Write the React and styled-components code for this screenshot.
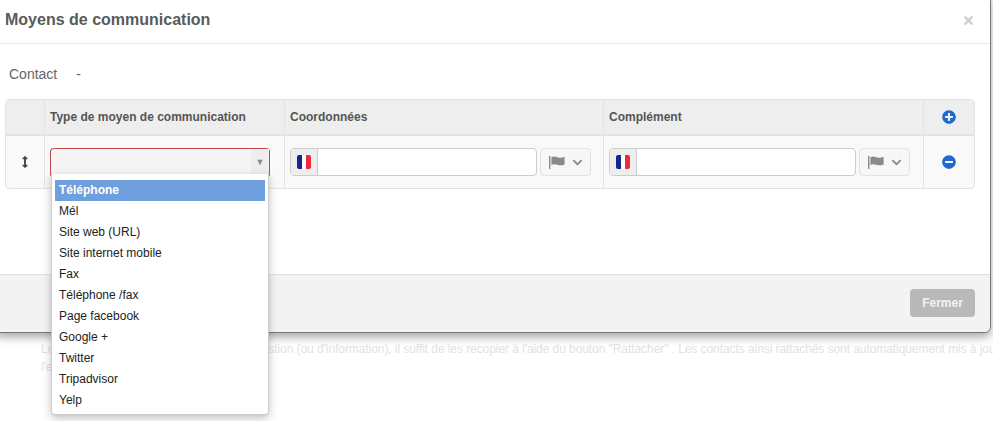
import styled, { createGlobalStyle } from "styled-components";
import { FaArrowsAltV, FaChevronDown, FaMinusCircle, FaPlusCircle, FaTimes } from "react-icons/fa";

const options = ["Téléphone", "Mél", "Site web (URL)", "Site internet mobile", "Fax", "Téléphone /fax", "Page facebook", "Google +", "Twitter", "Tripadvisor", "Yelp"];

const GlobalStyle = createGlobalStyle`
	html, body {
		margin: 0;
		height: 100%;
		background: #fff;
		overflow: hidden;
	}
	* {
		box-sizing: border-box;
	}
	#root {
		font-family: "Liberation Sans", Arial, sans-serif;
		font-size: 12px;
		color: #555;
	}
`;

const Page = styled.div`
	position: relative;
	width: 993px;
	height: 421px;
	overflow: hidden;
	padding: 340px 0 0 41px;
`;

const BackgroundText = styled.p`
	margin: 0;
	width: 952px;
	height: 36px;
	overflow: hidden;
	color: #e2e2e2;
	font-size: 12px;
	line-height: 18px;
	letter-spacing: -0.07px;
	white-space: nowrap;
`;

const Modal = styled.div`
	position: absolute;
	top: -6px;
	left: -6px;
	width: 997px;
	background: #fff;
	border: 1px solid #777;
	border-radius: 6px;
	box-shadow: 0 4px 10px rgba(0, 0, 0, 0.35);
`;

const ModalHeader = styled.header`
	display: flex;
	align-items: center;
	justify-content: space-between;
	height: 49px;
	padding: 2px 15px 0 10px;
	border-bottom: 1px solid #e9e9e9;
`;

const Title = styled.h4`
	margin: 0;
	font-size: 16px;
	font-weight: bold;
	color: #5a5a5a;
`;

const Close = styled.span`
	display: flex;
	color: #cfcfcf;
	font-size: 13px;
`;

const ModalBody = styled.div`
	height: 230px;
	padding: 20px 16px 0 10px;
`;

const ContactRow = styled.div`
	display: flex;
	gap: 19px;
	height: 35px;
	padding: 2px 0 0 4px;
	font-size: 14px;
	line-height: 16px;
	color: #666;
`;

const Table = styled.div`
	display: grid;
	grid-template-columns: 38px 240px 319px 320px 51px;
	width: 970px;
	border: 1px solid #e3e3e3;
	border-radius: 4px;
	background: #f9f9f9;
`;

const HeadCell = styled.div`
	display: flex;
	align-items: center;
	justify-content: ${(p) => (p.$center ? "center" : "flex-start")};
	height: 36px;
	padding-left: ${(p) => (p.$center ? "0" : "5px")};
	background: #eeeeee;
	border-bottom: 2px solid #e3e3e3;
	border-left: ${(p) => (p.$first ? "0" : "1px solid #e3e3e3")};
	font-weight: bold;
	color: #555;
`;

const Cell = styled.div`
	position: relative;
	display: flex;
	align-items: center;
	justify-content: ${(p) => (p.$center ? "center" : "flex-start")};
	height: 52px;
	padding: ${(p) => (p.$center ? "0" : "0 5px")};
	border-left: ${(p) => (p.$first ? "0" : "1px solid #e3e3e3")};
`;

const AddIcon = styled(FaPlusCircle)`
	color: #1f6ad1;
	font-size: 14px;
`;

const RemoveIcon = styled(FaMinusCircle)`
	color: #1f6ad1;
	font-size: 14px;
`;

const MoveIcon = styled(FaArrowsAltV)`
	color: #444;
	font-size: 12px;
`;

const Select = styled.div`
	display: flex;
	justify-content: flex-end;
	width: 220px;
	height: 28px;
	background: #f5f5f5;
	border: 1px solid #c9c9c9;
	border-top-color: #c24a4a;
	border-left-color: #c24a4a;
	border-right-color: #c24a4a;
	border-radius: 4px 4px 0 0;
`;

const SelectArrow = styled.span`
	display: flex;
	align-items: center;
	justify-content: center;
	width: 18px;
	background: #eee;
	color: #888;
	font-size: 9px;
`;

const Dropdown = styled.ul`
	position: absolute;
	top: 38px;
	left: 6px;
	width: 218px;
	margin: 0;
	padding: 6px 3px 3px;
	list-style: none;
	background: #fff;
	border: 1px solid #ccc;
	border-top: 0;
	border-radius: 0 0 4px 4px;
	box-shadow: 0 3px 8px rgba(0, 0, 0, 0.25);
	z-index: 2;
`;

const Option = styled.li`
	height: 21px;
	padding-left: 4px;
	line-height: 21px;
	color: ${(p) => (p.$active ? "#fff" : "#222")};
	font-weight: ${(p) => (p.$active ? "bold" : "normal")};
	background: ${(p) => (p.$active ? "#6f9fdc" : "transparent")};
`;

const PhoneField = styled.div`
	display: flex;
	width: 247px;
	height: 28px;
	background: #fff;
	border: 1px solid #ccc;
	border-radius: 4px;
	overflow: hidden;
`;

const FlagBox = styled.span`
	display: flex;
	align-items: center;
	justify-content: center;
	width: 27px;
	background: #eeeeee;
	border-right: 1px solid #ccc;
`;

const FrenchFlag = styled.span`
	width: 14px;
	height: 14px;
	border-radius: 2px;
	background: linear-gradient(to right, #12288c 33%, #fff 33%, #fff 66%, #ef2b3b 66%);
`;

const CountryButton = styled.span`
	display: flex;
	align-items: center;
	justify-content: center;
	gap: 7px;
	width: 51px;
	height: 28px;
	margin-left: 3px;
	background: #f7f7f7;
	border: 1px solid #e2e2e2;
	border-radius: 4px;
	color: #8a8a8a;
`;

const Chevron = styled(FaChevronDown)`
	font-size: 11px;
`;

const ModalFooter = styled.footer`
	display: flex;
	align-items: center;
	justify-content: flex-end;
	height: 58px;
	padding: 0 15px 2px 0;
	background: #f3f3f3;
	border-top: 1px solid #e0e0e0;
	border-radius: 0 0 6px 6px;
`;

const CloseButton = styled.button`
	width: 65px;
	height: 28px;
	padding: 0;
	border: 0;
	border-radius: 4px;
	background: #b9b9b9;
	color: #f3f3f3;
	font-family: inherit;
	font-size: 12px;
	font-weight: bold;
`;

function WavingFlag() {
	return (
		<svg width="16" height="13" viewBox="0 0 16 13" fill="currentColor">
			<rect x="0" y="0" width="1.4" height="13" />
			<path d="M2.4 1.2C4.4 0 6.4 0.4 8.4 1.2C10.6 2 13 2 15.6 0.8V8.4C13 9.6 10.6 9.6 8.4 8.8C6.4 8 4.4 7.8 2.4 9Z" />
		</svg>
	);
}

function Phone() {
	return (
		<>
			<PhoneField>
				<FlagBox><FrenchFlag /></FlagBox>
			</PhoneField>
			<CountryButton>
				<WavingFlag />
				<Chevron />
			</CountryButton>
		</>
	);
}

export default function App() {
	return (
		<Page>
			<GlobalStyle />
			<BackgroundText>
				Les contacts communs à des fiches de question (ou d'information), il suffit de les recopier à l'aide du bouton "Rattacher" . Les contacts ainsi rattachés sont automatiquement mis à jour
				<br />
				l'ensemble des fiches.
			</BackgroundText>
			<Modal>
				<ModalHeader>
					<Title>Moyens de communication</Title>
					<Close><FaTimes /></Close>
				</ModalHeader>
				<ModalBody>
					<ContactRow>
						<span>Contact</span>
						<span>-</span>
					</ContactRow>
					<Table>
						<HeadCell $first />
						<HeadCell>Type de moyen de communication</HeadCell>
						<HeadCell>Coordonnées</HeadCell>
						<HeadCell>Complément</HeadCell>
						<HeadCell $center><AddIcon /></HeadCell>
						<Cell $first $center><MoveIcon /></Cell>
						<Cell>
							<Select>
								<SelectArrow>▼</SelectArrow>
							</Select>
							<Dropdown>
								{options.map((option, index) => (
									<Option key={option} $active={index === 0}>{option}</Option>
								))}
							</Dropdown>
						</Cell>
						<Cell><Phone /></Cell>
						<Cell><Phone /></Cell>
						<Cell $center><RemoveIcon /></Cell>
					</Table>
				</ModalBody>
				<ModalFooter>
					<CloseButton>Fermer</CloseButton>
				</ModalFooter>
			</Modal>
		</Page>
	);
}
